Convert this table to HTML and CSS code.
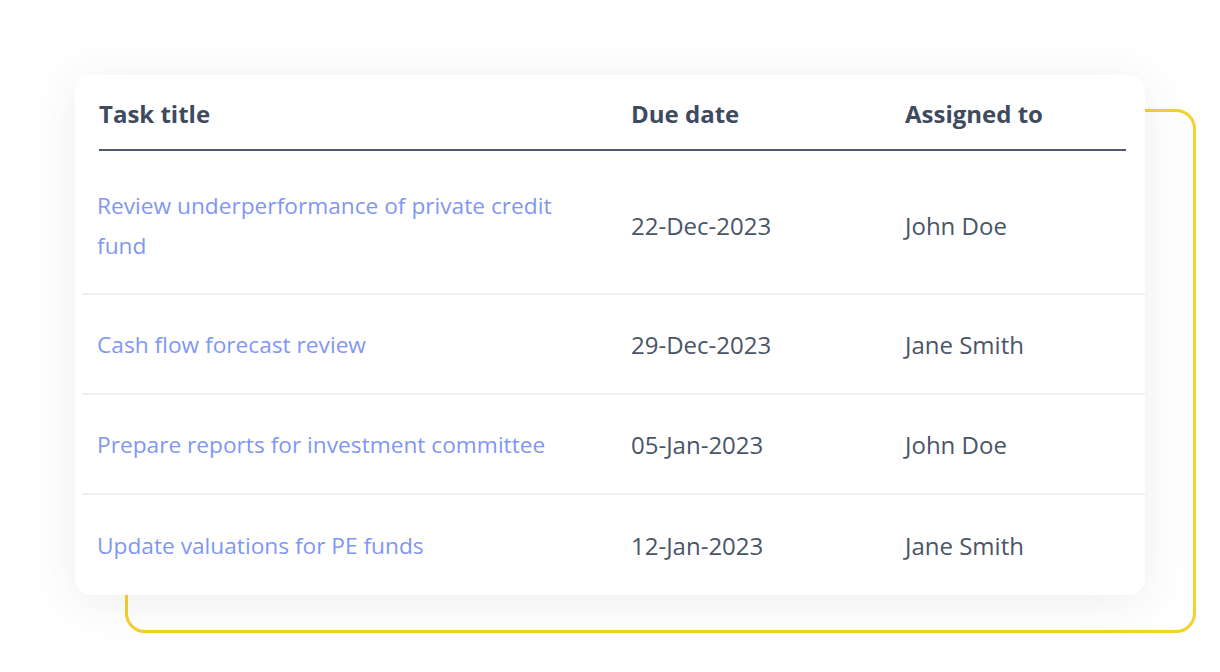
FILE: index.html
```html
<!DOCTYPE html>
<html>
<head>
<meta charset="utf-8">
<link rel="stylesheet" href="styles.css">
</head>
<body>
<div class="stage">
  <div class="frame"></div>
  <div class="card">
    <div class="head">
      <div>Task title</div>
      <div>Due date</div>
      <div>Assigned to</div>
    </div>
    <div class="row tall">
      <div class="title">Review underperformance of private credit fund</div>
      <div class="cell">22-Dec-2023</div>
      <div class="cell">John Doe</div>
    </div>
    <div class="row">
      <div class="title">Cash flow forecast review</div>
      <div class="cell">29-Dec-2023</div>
      <div class="cell">Jane Smith</div>
    </div>
    <div class="row">
      <div class="title">Prepare reports for investment committee</div>
      <div class="cell">05-Jan-2023</div>
      <div class="cell">John Doe</div>
    </div>
    <div class="row last">
      <div class="title">Update valuations for PE funds</div>
      <div class="cell">12-Jan-2023</div>
      <div class="cell">Jane Smith</div>
    </div>
  </div>
</div>
</body>
</html>
```

FILE: styles.css
```css
* { box-sizing: border-box; }
html, body {
  margin: 0;
  background: #ffffff;
  font-family: "Open Sans", "Noto Sans", sans-serif;
}
.stage {
  position: relative;
  width: 1220px;
  height: 672px;
  padding: 75px 0 0 75px;
}
.frame {
  position: absolute;
  left: 125px;
  top: 109px;
  width: 1071px;
  height: 524px;
  border: 3px solid #f6d02f;
  border-radius: 20px;
}
.card {
  position: relative;
  width: 1070px;
  height: 520px;
  background: #ffffff;
  border-radius: 16px;
  box-shadow: 0 6px 50px rgba(40, 50, 80, 0.09);
  overflow: hidden;
}
.head {
  display: grid;
  grid-template-columns: 532px 274px 1fr;
  margin: 0 19px 0 24px;
  height: 76px;
  padding-top: 24px;
  border-bottom: 2px solid #4e5a6e;
  font-size: 24px;
  font-weight: 700;
  color: #3e4b5e;
  line-height: 30px;
}
.row {
  display: grid;
  grid-template-columns: 534px 274px 1fr;
  align-items: center;
  margin-left: 7px;
  padding-left: 15px;
  padding-top: 2px;
  height: 100px;
  border-bottom: 2px solid #eeeff1;
  line-height: 40px;
}
.row.tall { height: 144px; padding-top: 8px; }
.row.last { border-bottom: none; }
.title {
  font-size: 22.7px;
  color: #7f97f3;
  padding-right: 40px;
}
.cell {
  font-size: 24px;
  color: #4a5567;
}
```
